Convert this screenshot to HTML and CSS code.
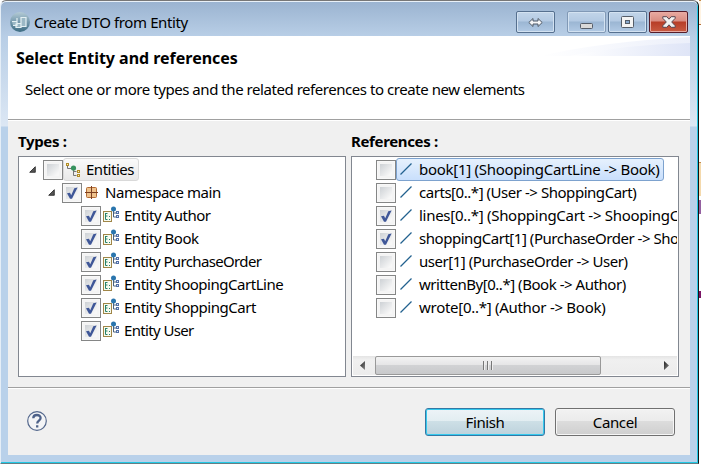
FILE: index.html
```
<!DOCTYPE html>
<html lang="en">
<head>
<meta charset="utf-8">
<title>Create DTO from Entity</title>
<link rel="stylesheet" href="styles.css">
</head>
<body>
<svg width="0" height="0" class="defs">
  <defs>
    <linearGradient id="orb" x1="0" y1="0" x2="0" y2="1"><stop offset="0" stop-color="#b4cbd5"/><stop offset=".5" stop-color="#7599ad"/><stop offset="1" stop-color="#3c6c82"/></linearGradient>
    <linearGradient id="arrow" x1="0" y1="0" x2="1" y2="1"><stop offset="0" stop-color="#222"/><stop offset="1" stop-color="#888"/></linearGradient>
  </defs>
  <symbol id="check" viewBox="0 0 20 20"><path d="M5 10.200 8 9.800 9.200 12.300 12.300 5.300 15.600 4.400 10 15.800H8z" fill="#3f5798"/></symbol>
  <symbol id="tree" viewBox="0 0 16 16"><path d="M2.500 4v2.500h4M8.500 7v6.500h3M8.500 9.500h3" fill="none" stroke="#777"/><rect x="1.500" y="1.500" width="2" height="2" fill="#fff3b0" stroke="#b08b28"/><circle cx="8.500" cy="6" r="2.600" fill="#37935f"/><rect x="12.500" y="8.500" width="2" height="2" fill="#fff3b0" stroke="#b08b28"/><rect x="12.500" y="12.500" width="2" height="2" fill="#fff3b0" stroke="#b08b28"/></symbol>
  <symbol id="package" viewBox="0 0 16 16"><rect x="2.500" y="2.500" width="10" height="10" rx="1" fill="#efc28c" stroke="#b36b34"/><path d="M7.500 1v13M1 7.500h13" stroke="#7b3f20"/></symbol>
  <symbol id="entity" viewBox="0 0 18 17"><rect x="1.500" y="5.500" width="8" height="10" fill="#f7faef" stroke="#a08648"/><path d="M3.500 7v6.500h2M3.500 10h2M3.500 7.500h2M7 10.500h1M7 13.500h1" fill="none" stroke="#268269"/><path d="M11.500 4v7h3M11.500 7h3" fill="none" stroke="#49627f"/><circle cx="11.500" cy="3" r="2.500" fill="#2a75ad"/><rect x="14.500" y="5.500" width="2" height="2" fill="#dceaff" stroke="#526fa7"/><rect x="14.500" y="9.500" width="2" height="2" fill="#dceaff" stroke="#526fa7"/></symbol>
  <symbol id="slash" viewBox="0 0 14 14"><path d="M1.500 12.500 12.500 1.500" stroke="#22618f" stroke-width="1.300"/></symbol>
  <symbol id="twisty" viewBox="0 0 7 7"><path d="M6.300.7v5.600H.7z" fill="#555" stroke="#222" stroke-width=".8"/></symbol>
</svg>
<div class="window">
  <header class="titlebar">
    <svg class="app-icon" viewBox="0 0 20 20"><circle cx="10" cy="10" r="10" fill="url(#orb)"/><path d="M11 5.500h5v9h-5zM2 9.500h5v4H3M7 6v6M7 11.500h4v4H6v-4" fill="#9bb8c5" stroke="#e4f0f3" stroke-width="1.200"/></svg>
    <h1 class="caption">Create DTO from Entity</h1>
    <div class="controls">
      <button class="ctl ctl-resize" aria-label="Resize"><svg width="15" height="11" viewBox="0 0 15 11"><path d="M.8 5.500 5 1.500v2.500h5V1.500l4.200 4L10 9.500V7H5v2.500z" fill="#f5f6f8" stroke="#4e5966"/></svg></button>
      <button class="ctl ctl-min" aria-label="Minimize"><svg width="13" height="14"><rect x=".5" y="8.500" width="12" height="5" rx="1" fill="#d9d9d9" stroke="#555d68"/></svg></button>
      <button class="ctl" aria-label="Maximize"><svg width="13" height="12"><rect x=".5" y=".5" width="12" height="11" rx="1" fill="#f4f4f4" stroke="#555d68"/><rect x="4.500" y="4.500" width="4" height="3" fill="#88a9ce" stroke="#555d68"/></svg></button>
      <button class="ctl ctl-close" aria-label="Close"><svg width="14" height="12" viewBox="0 0 14 12"><path d="M.8.700h4L7 3.200 9.200.700h4v1.600L9.700 6l3.500 3.700v1.600h-4L7 8.800 4.800 11.300h-4V9.700L4.300 6 .8 2.300z" fill="#f1f1f1" stroke="#594750"/></svg></button>
    </div>
  </header>
  <main class="client">
    <section class="banner">
      <svg class="swoosh" viewBox="0 0 150 20" preserveAspectRatio="none"><defs><linearGradient id="haze"><stop offset="0" stop-color="#fff"/><stop offset="1" stop-color="#dfe5f7"/></linearGradient></defs><path d="M0 20Q60 6 150 1V20z" fill="url(#haze)" opacity=".6"/><path d="M30 20Q90 8 150 7V20z" fill="url(#haze)"/></svg>
      <h2>Select Entity and references</h2>
      <p>Select one or more types and the related references to create new elements</p>
    </section>
    <section class="panes">
      <div class="pane">
        <h3>Types :</h3>
        <ul class="list types">
          <li class="l0"><svg class="twisty"><use href="#twisty"/></svg><i class="box"></i><span class="item focus"><svg class="ico"><use href="#tree"/></svg><span class="t">Entities</span></span></li>
          <li class="l1"><svg class="twisty"><use href="#twisty"/></svg><i class="box"><svg><use href="#check"/></svg></i><span class="item"><svg class="ico"><use href="#package"/></svg><span class="t">Namespace main</span></span></li>
          <li class="l2"><i class="box"><svg><use href="#check"/></svg></i><span class="item"><svg class="ent"><use href="#entity"/></svg><span class="t">Entity Author</span></span></li>
          <li class="l2"><i class="box"><svg><use href="#check"/></svg></i><span class="item"><svg class="ent"><use href="#entity"/></svg><span class="t">Entity Book</span></span></li>
          <li class="l2 tight"><i class="box"><svg><use href="#check"/></svg></i><span class="item"><svg class="ent"><use href="#entity"/></svg><span class="t">Entity PurchaseOrder</span></span></li>
          <li class="l2"><i class="box"><svg><use href="#check"/></svg></i><span class="item"><svg class="ent"><use href="#entity"/></svg><span class="t">Entity ShoopingCartLine</span></span></li>
          <li class="l2"><i class="box"><svg><use href="#check"/></svg></i><span class="item"><svg class="ent"><use href="#entity"/></svg><span class="t">Entity ShoppingCart</span></span></li>
          <li class="l2 tight"><i class="box"><svg><use href="#check"/></svg></i><span class="item"><svg class="ent"><use href="#entity"/></svg><span class="t">Entity User</span></span></li>
        </ul>
      </div>
      <div class="pane">
        <h3>References :</h3>
        <div class="list refs">
          <ul>
            <li class="loose"><i class="box"></i><span class="item selected"><svg class="ref"><use href="#slash"/></svg><span class="t">book[1] (ShoopingCartLine -&gt; Book)</span></span></li>
            <li><i class="box"></i><span class="item"><svg class="ref"><use href="#slash"/></svg><span class="t">carts[0..*] (User -&gt; ShoppingCart)</span></span></li>
            <li class="loose"><i class="box"><svg><use href="#check"/></svg></i><span class="item"><svg class="ref"><use href="#slash"/></svg><span class="t">lines[0..*] (ShoppingCart -&gt; ShoopingCartLine)</span></span></li>
            <li><i class="box"><svg><use href="#check"/></svg></i><span class="item"><svg class="ref"><use href="#slash"/></svg><span class="t">shoppingCart[1] (PurchaseOrder -&gt; ShoppingCart)</span></span></li>
            <li><i class="box"></i><span class="item"><svg class="ref"><use href="#slash"/></svg><span class="t">user[1] (PurchaseOrder -&gt; User)</span></span></li>
            <li><i class="box"></i><span class="item"><svg class="ref"><use href="#slash"/></svg><span class="t">writtenBy[0..*] (Book -&gt; Author)</span></span></li>
            <li class="loose"><i class="box"></i><span class="item"><svg class="ref"><use href="#slash"/></svg><span class="t">wrote[0..*] (Author -&gt; Book)</span></span></li>
          </ul>
          <div class="scrollbar">
            <svg class="sb-left" width="5" height="9"><path d="M5 0v9L0 4.500z" fill="url(#arrow)"/></svg>
            <div class="thumb"><b></b><b></b><b></b></div>
            <svg class="sb-right" width="5" height="9"><path d="M0 0v9l5-4.500z" fill="url(#arrow)"/></svg>
          </div>
        </div>
      </div>
    </section>
    <footer class="actions">
      <svg class="help" viewBox="0 0 20 20"><circle cx="10" cy="10" r="9.300" fill="#f3f4f6" stroke="#53678c" stroke-width="1.200"/><path d="M6.300 7.200C6.300 2.900 13.600 3 13.600 7c0 2.600-3.400 2.600-3.400 5.400M10.200 14.200v2.300" fill="none" stroke="#4d6189" stroke-width="2.300"/></svg>
      <button class="btn primary">Finish</button>
      <button class="btn">Cancel</button>
    </footer>
  </main>
</div>
<aside class="behind"><i class="top"></i><i></i><b></b><u></u></aside>
</body>
</html>
```
FILE: styles.css
```
* { box-sizing: border-box; }
body { margin: 0; width: 701px; height: 464px; overflow: hidden; display: flex; background: #fff; color: #000; font: 15px/23px "Noto Sans", sans-serif; letter-spacing: -.38px; }
svg { display: block; flex: none; }
.defs { position: absolute; }
h1, h2, h3, p, ul { margin: 0; padding: 0; font-size: inherit; white-space: nowrap; }
ul { list-style: none; }
button { font: inherit; color: inherit; letter-spacing: inherit; padding: 0; }

.window { width: 699px; height: 464px; flex: none; padding: 0 7px 7px 7px; border: 1px solid #777; border-left-color: #e5eef7; border-right-color: #111; border-bottom-color: #657e84; border-radius: 6px 6px 0 0; background: linear-gradient(#9ab3d0 0, #b8cee6 36px, #dce7f4 125px, #b9d1ea 126px, #b9d1ea); box-shadow: inset 0 1px #e9f1f8, inset -1px -1px #23c8e5; }
.titlebar { height: 35px; display: flex; align-items: center; padding-left: 2px; background: linear-gradient(#9ab3d0, #b8cee6); box-shadow: inset 0 1px #e9f1f8; }
.app-icon { width: 20px; height: 20px; margin-top: 7px; }
.caption { font-weight: 400; margin: 8px auto 0 4px; }
.controls { display: flex; margin: 7px 3px 0 0; }
.ctl { width: 39px; height: 22px; margin-right: 2px; display: flex; align-items: center; justify-content: center; border: 1px solid #56708f; border-radius: 2px; background: linear-gradient(#c2d5e9 0, #b4cae3 45%, #9bb6d3 50%, #b2cae5); box-shadow: inset 0 0 0 1px #d3e2f1; }
.ctl-resize { margin-right: 12px; }
.ctl-min { border-color: #8199b6; }
.ctl-close { margin: 0; border-color: #551c29; background: linear-gradient(#e9aaa1 0, #d98d82 45%, #b73d27 50%, #c95b42); box-shadow: inset 0 0 0 1px #e7aaa2; }

.client { width: 682px; height: 419px; background: #f0f0f0; display: flex; flex-direction: column; }
.banner { position: relative; height: 84px; padding: 10px 8px; background: #fff; border-bottom: 1px solid #a0a0a0; }
.swoosh { position: absolute; right: 0; top: 0; width: 150px; height: 20px; }
.banner h2 { position: relative; font-size: 16px; line-height: 24px; letter-spacing: -.02px; }
.banner p { margin: 8px 0 0 9px; letter-spacing: -.45px; }
.panes { height: 268px; padding: 9px 10px 0; border-top: 1px solid #fff; border-bottom: 1px solid #a0a0a0; display: flex; gap: 5px; }
.pane { width: 328px; }
.pane h3 { height: 26px; line-height: 23px; letter-spacing: -.35px; }
.list { height: 221px; border: 1px solid #828790; background: #fff; overflow: hidden; }
.types { padding-top: 1px; letter-spacing: -.47px; }
.refs { padding: 1px 1px 1px; display: flex; flex-direction: column; letter-spacing: -.46px; }
.refs ul { flex: 1; overflow: hidden; padding-left: 23px; }
li { height: 23px; display: flex; align-items: center; white-space: nowrap; }
.tight { letter-spacing: -.64px; }
.loose { letter-spacing: -.28px; }
.l0 { padding-left: 10px; }
.l1 { padding-left: 29px; }
.l2 { padding-left: 62px; }
.twisty { width: 7px; height: 7px; margin-right: 7px; }
.box { width: 20px; height: 20px; flex: none; border: 1px solid #858686; background: linear-gradient(135deg, #cdd1d5, #f7f7f7 85%) 3px 3px / 12px 12px no-repeat, #f4f4f4; box-shadow: inset 0 0 0 1px #f8f8f8; }
.box svg { width: 20px; height: 20px; margin: -1px; }
.item { height: 23px; display: flex; align-items: center; border: 1px solid transparent; border-radius: 3px; padding-right: 3px; }
.focus { border-color: #d9d9d9; background: linear-gradient(#fafafa, #e9e9e9); }
.selected { border-color: #7da2ce; background: linear-gradient(#e6f1fd, #c9dffc); }
.ico { width: 16px; height: 16px; margin: 0 5px 0 1px; }
.l0 .item { padding-right: 4px; }
.ent { width: 18px; height: 17px; margin: -3px 4px 0 0; }
.ref { width: 14px; height: 14px; margin: -2px 6px 0 2px; }
.scrollbar { height: 19px; display: flex; align-items: center; background: linear-gradient(#e4e4e4, #f0f0f0 20%, #ececec); }
.sb-left { margin: 0 10px 0 7px; }
.thumb { width: 226px; height: 19px; border: 1px solid #999; border-radius: 2px; background: linear-gradient(#f3f3f3 0, #e5e5e6 48%, #d1d2d4 50%, #c8c9cb); display: flex; align-items: center; justify-content: center; gap: 2px; }
.thumb b { width: 2px; height: 9px; background: #777; border-right: 1px solid #eee; }
.sb-right { margin-left: auto; margin-right: 8px; }
.actions { flex: 1; border-top: 1px solid #fff; display: flex; align-items: flex-start; padding: 19px 15px 0 19px; }
.help { width: 20px; height: 20px; margin: 3px auto 0 0; }
.btn { width: 120px; height: 28px; margin-left: 10px; border: 1px solid #707070; border-radius: 3px; background: linear-gradient(#f2f2f2 0, #ebebeb 46%, #dcdcdc 48%, #cfcfcf); box-shadow: inset 0 0 0 1px #f6f6f6; }
.primary { border-color: #3478a4; background: linear-gradient(#edf3f7 0, #e2edf1 46%, #cddfe6 48%, #bdd2dc); box-shadow: inset 0 0 0 1px #35c9ee; }
.behind { width: 2px; }
.behind i { display: block; height: 34px; background: #f4d9ac; border-top: 1px solid #c28a4b; }
.behind .top { height: 25px; margin-bottom: 137px; background: #fff3e2; border-bottom: 1px solid #b5713a; }
.behind b { display: block; height: 14px; margin-top: 4px; border: 1px solid #9460a0; background: #e0caec; }
.behind u { display: block; height: 7px; margin-top: 77px; background: #7a1465; }
```
